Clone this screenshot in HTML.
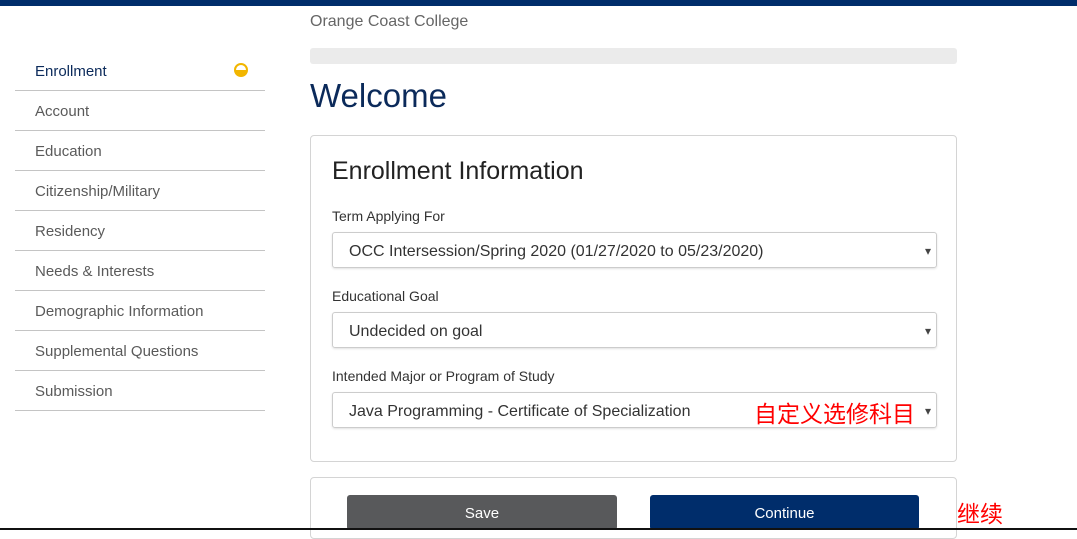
<!DOCTYPE html>
<html><head><meta charset="utf-8"><style>
body{margin:0;width:1077px;height:530px;overflow:hidden;background:#fff;font-family:"Liberation Sans","Noto Sans CJK SC",sans-serif;position:relative}
.top{position:absolute;left:0;top:0;width:1077px;height:6px;background:#002d6b}
.bot{position:absolute;left:0;top:528px;width:1077px;height:2px;background:#111}
.nav{position:absolute;left:15px;top:51px;width:250px}
.nav div{height:39px;border-bottom:1px solid #c4c4c4;line-height:42px;padding-left:20px;font-size:15px;color:#5a5a5a;position:relative}
.nav div.a{color:#0b2a5a}
.dot{position:absolute;right:17px;top:12px;width:14px;height:14px;border-radius:50%;background:#f2b600;box-sizing:border-box;border:2px solid #f2b600;overflow:hidden}
.dot:before{content:"";position:absolute;left:0;top:0;width:100%;height:50%;background:#fff}
.abs{position:absolute}
.card{position:absolute;left:310px;width:645px;border:1px solid #d4d4d4;border-radius:4px;background:#fff}
.lbl{position:absolute;left:332px;font-size:14px;color:#333}
.sel{position:absolute;left:332px;width:603px;height:34px;border:1px solid #ccc;border-radius:3px;box-shadow:0 1px 2px rgba(0,0,0,.12);font-size:16px;color:#333;line-height:38px;padding-left:16px;box-sizing:content-box}
.sel:after{content:"▾";position:absolute;right:5px;top:-1px;font-size:12px;color:#444}
.btn{position:absolute;top:495px;height:35px;width:270px;border-radius:3px;color:#fff;font-size:15px;text-align:center;line-height:37px}
</style></head><body>
<div class="top"></div>
<div class="abs" style="left:310px;top:13px;font-size:16px;color:#666">Orange Coast College</div>
<div class="abs" style="left:310px;top:48px;width:647px;height:16px;background:#ebebeb;border-radius:3px"></div>
<div class="abs" style="left:310px;top:77px;font-size:33px;color:#0b2a5a">Welcome</div>
<div class="nav">
<div class="a">Enrollment<span class="dot"></span></div>
<div>Account</div><div>Education</div><div>Citizenship/Military</div><div>Residency</div><div>Needs &amp; Interests</div><div>Demographic Information</div><div>Supplemental Questions</div><div>Submission</div>
</div>
<div class="card" style="top:135px;height:325px"></div>
<div class="abs" style="left:332px;top:157px;font-size:25px;color:#222">Enrollment Information</div>
<div class="lbl" style="top:208px">Term Applying For</div>
<div class="sel" style="top:232px;width:587px">OCC Intersession/Spring 2020 (01/27/2020 to 05/23/2020)</div>
<div class="lbl" style="top:288px">Educational Goal</div>
<div class="sel" style="top:312px;width:587px">Undecided on goal</div>
<div class="lbl" style="top:368px">Intended Major or Program of Study</div>
<div class="sel" style="top:392px;width:587px">Java Programming - Certificate of Specialization</div>
<div class="abs" style="left:754px;top:399px;font-size:23px;color:#f00;line-height:30px">自定义选修科目</div>
<div class="card" style="top:477px;height:60px"></div>
<div class="btn" style="left:347px;background:#58595b">Save</div>
<div class="btn" style="left:650px;width:269px;background:#002d6b">Continue</div>
<div class="abs" style="left:957px;top:495px;font-size:23px;color:#f00">继续</div>
<div class="bot"></div>
</body></html>
